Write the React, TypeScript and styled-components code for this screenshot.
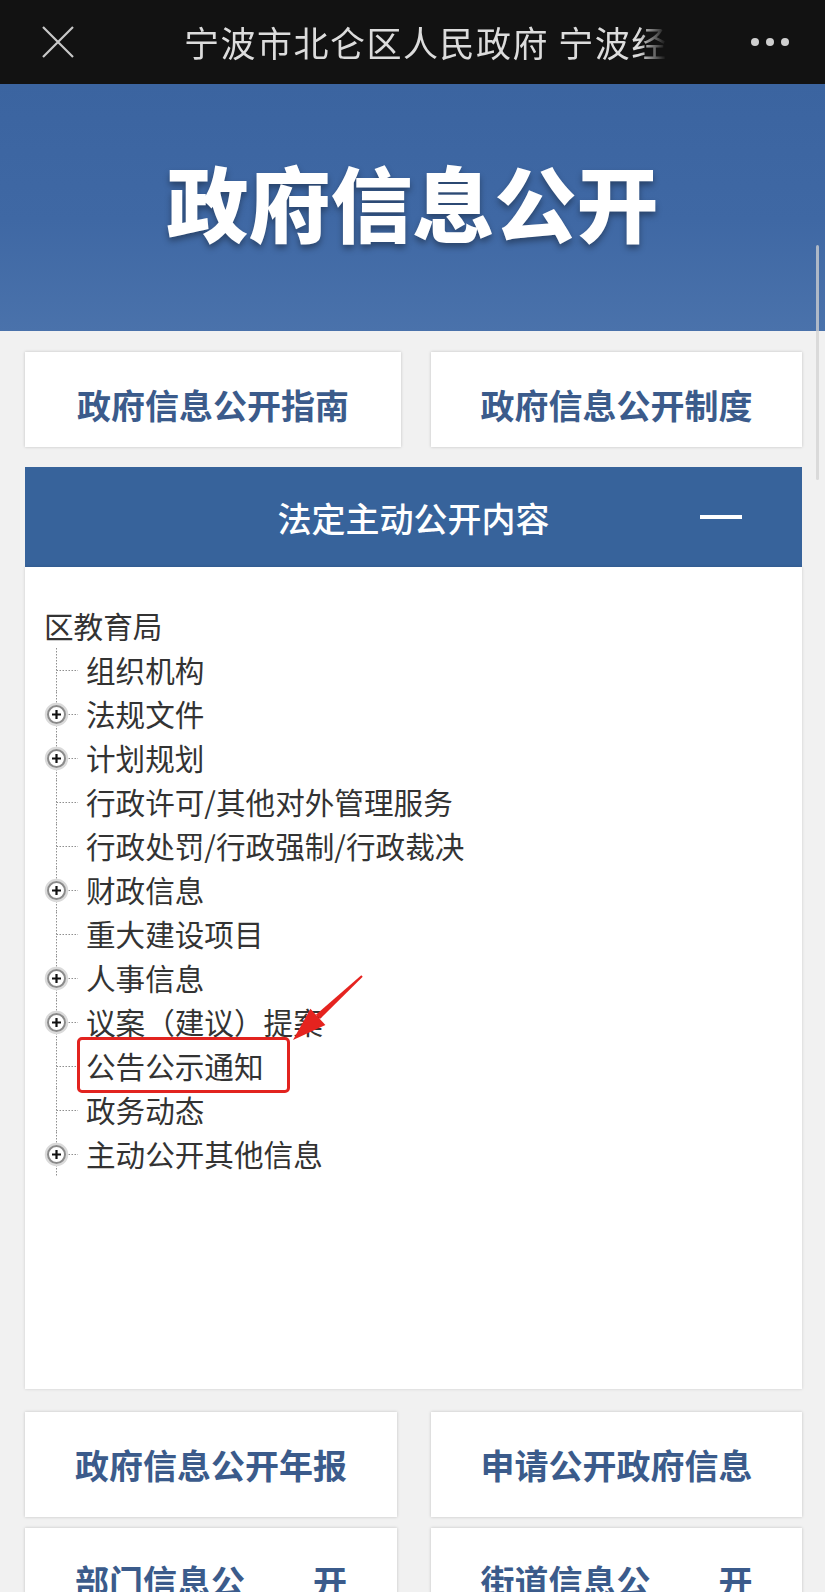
import React from "react";
import styled, { createGlobalStyle } from "styled-components";

const GlobalStyle = createGlobalStyle`
  html, body {
    margin: 0;
    padding: 0;
    background: #f1f1f1;
  }
  body {
    font-family: "Noto Sans CJK SC", "Noto Sans", sans-serif;
  }
`;

type TreeItem = {
  label: string;
  expandable?: boolean;
  marked?: boolean;
};

const treeItems: TreeItem[] = [
  { label: "组织机构" },
  { label: "法规文件", expandable: true },
  { label: "计划规划", expandable: true },
  { label: "行政许可/其他对外管理服务" },
  { label: "行政处罚/行政强制/行政裁决" },
  { label: "财政信息", expandable: true },
  { label: "重大建设项目" },
  { label: "人事信息", expandable: true },
  { label: "议案（建议）提案", expandable: true },
  { label: "公告公示通知", marked: true },
  { label: "政务动态" },
  { label: "主动公开其他信息", expandable: true },
];

const CloseIcon = () => (
  <svg width="32" height="32" viewBox="0 0 32 32">
    <path d="M1 1 L31 31 M31 1 L1 31" stroke="#c8c8c8" strokeWidth="2.2" />
  </svg>
);

const Connector: React.FC<{ expandable?: boolean }> = ({ expandable }) => (
  <svg width="34" height="44" viewBox="0 0 34 44">
    <line x1="12.5" y1="0" x2="12.5" y2="44" stroke="#8f8f8f" strokeWidth="1" strokeDasharray="1.5 1.5" />
    <line x1="12.5" y1="22.5" x2="34" y2="22.5" stroke="#8f8f8f" strokeWidth="1" strokeDasharray="1.5 1.5" />
    {expandable && (
      <g>
        <circle cx="12.5" cy="22.5" r="10.5" fill="#ffffff" stroke="#dadada" strokeWidth="2.5" />
        <circle cx="12.5" cy="22.5" r="8.5" fill="#ffffff" stroke="#8a8a8a" strokeWidth="2" />
        <path d="M8 22.5 H17 M12.5 18 V27" stroke="#111" strokeWidth="2.2" />
      </g>
    )}
  </svg>
);

const App: React.FC = () => {
  return (
    <Page>
      <GlobalStyle />
      <TopBar>
        <CloseBtn>
          <CloseIcon />
        </CloseBtn>
        <BarTitle>宁波市北仑区人民政府 宁波经济技术开发区</BarTitle>
        <Dots>
          <Dot />
          <Dot />
          <Dot />
        </Dots>
      </TopBar>
      <Banner>
        <BannerTitle>政府信息公开</BannerTitle>
      </Banner>
      <Content>
        <CardRow>
          <Card>政府信息公开指南</Card>
          <Card>政府信息公开制度</Card>
        </CardRow>
        <SectionHeader>
          <span />
          <SectionTitle>法定主动公开内容</SectionTitle>
          <Collapse />
        </SectionHeader>
        <Panel>
          <RootLabel>区教育局</RootLabel>
          {treeItems.map((item) => (
            <TreeRow key={item.label}>
              <Connector expandable={item.expandable} />
              {item.marked ? (
                <Marked>{item.label}</Marked>
              ) : (
                <RowLabel>{item.label}</RowLabel>
              )}
            </TreeRow>
          ))}
          <Arrow width="90" height="85" viewBox="0 0 90 85">
            <polygon points="82.7,11.7 81.3,10.3 35.9,49.7 39.9,54.1" fill="#e5231f" />
            <polygon points="13,75 45.4,60 30.4,43.8" fill="#e5231f" />
          </Arrow>
        </Panel>
        <BottomRow>
          <Card tall>政府信息公开年报</Card>
          <Card tall>申请公开政府信息</Card>
        </BottomRow>
        <BottomRow>
          <Card tall>部门信息公　　开</Card>
          <Card tall>街道信息公　　开</Card>
        </BottomRow>
      </Content>
      <ScrollThumb />
    </Page>
  );
};

const Page = styled.div`
  position: relative;
  width: 825px;
  min-height: 1592px;
  background: #f1f1f1;
  overflow: hidden;
`;

const TopBar = styled.div`
  display: flex;
  align-items: center;
  height: 84px;
  background: #121212;
`;

const CloseBtn = styled.div`
  display: flex;
  margin-left: 42px;
  width: 32px;
  height: 32px;
`;

const BarTitle = styled.div`
  margin-left: 110px;
  width: 482px;
  overflow: hidden;
  white-space: nowrap;
  color: #dcdcdc;
  font-size: 35px;
  letter-spacing: 1.5px;
  line-height: 84px;
  -webkit-mask-image: linear-gradient(90deg, #000 0, #000 455px, transparent 482px);
  mask-image: linear-gradient(90deg, #000 0, #000 455px, transparent 482px);
`;

const Dots = styled.div`
  display: flex;
  gap: 7px;
  margin-left: auto;
  margin-right: 36px;
`;

const Dot = styled.span`
  width: 8px;
  height: 8px;
  border-radius: 50%;
  background: #cfcfcf;
`;

const Banner = styled.div`
  display: flex;
  justify-content: center;
  align-items: center;
  height: 247px;
  padding-bottom: 14px;
  box-sizing: border-box;
  background: linear-gradient(180deg, #3b64a0 0%, #3f68a4 55%, #4a72ab 100%);
`;

const BannerTitle = styled.h1`
  margin: 0;
  color: #ffffff;
  font-size: 82px;
  font-weight: 900;
  text-shadow: 0 4px 6px rgba(0, 0, 0, 0.35);
`;

const Content = styled.div`
  padding: 21px 23px 0 25px;
`;

const CardRow = styled.div`
  display: grid;
  grid-template-columns: 376px 371px;
  gap: 30px;
`;

const BottomRow = styled.div`
  display: grid;
  grid-template-columns: 372px 371px;
  gap: 34px;
  margin-top: 23px;

  & + & {
    margin-top: 11px;
  }
`;

const Card = styled.div<{ tall?: boolean }>`
  display: flex;
  justify-content: center;
  align-items: center;
  height: ${(p) => (p.tall ? "105px" : "95px")};
  padding-top: ${(p) => (p.tall ? "0" : "10px")};
  box-sizing: border-box;
  background: #ffffff;
  box-shadow: 0 0 3px rgba(0, 0, 0, 0.2);
  color: #3b5b8b;
  font-size: 34px;
  font-weight: 700;
  white-space: pre;
`;

const SectionHeader = styled.div`
  display: grid;
  grid-template-columns: 1fr auto 1fr;
  align-items: center;
  height: 100px;
  margin-top: 20px;
  background: #37639b;
`;

const SectionTitle = styled.div`
  color: #ffffff;
  font-size: 34px;
  font-weight: 500;
`;

const Collapse = styled.span`
  justify-self: end;
  width: 42px;
  height: 4px;
  margin-right: 60px;
  background: #ffffff;
`;

const Panel = styled.div`
  position: relative;
  height: 822px;
  padding: 37px 0 0 19px;
  box-sizing: border-box;
  background: #ffffff;
  box-shadow: 0 0 3px rgba(0, 0, 0, 0.15);
  color: #333333;
  font-size: 29.6px;
`;

const RootLabel = styled.div`
  height: 44px;
  line-height: 44px;
`;

const TreeRow = styled.div`
  display: flex;
  align-items: center;
  height: 44px;
`;

const RowLabel = styled.span`
  margin-left: 8px;
  line-height: 44px;
  white-space: nowrap;
`;

const Marked = styled(RowLabel)`
  position: relative;

  &::after {
    content: "";
    position: absolute;
    top: -7px;
    bottom: -5px;
    left: -9px;
    right: -26px;
    border: 3.5px solid #e2231f;
    border-radius: 5px;
  }
`;

const Arrow = styled.svg`
  position: absolute;
  left: 255px;
  top: 398px;
`;

const ScrollThumb = styled.div`
  position: absolute;
  top: 245px;
  right: 6px;
  width: 3px;
  height: 235px;
  border-radius: 2px;
  background: rgba(210, 210, 210, 0.75);
`;

export default App;
